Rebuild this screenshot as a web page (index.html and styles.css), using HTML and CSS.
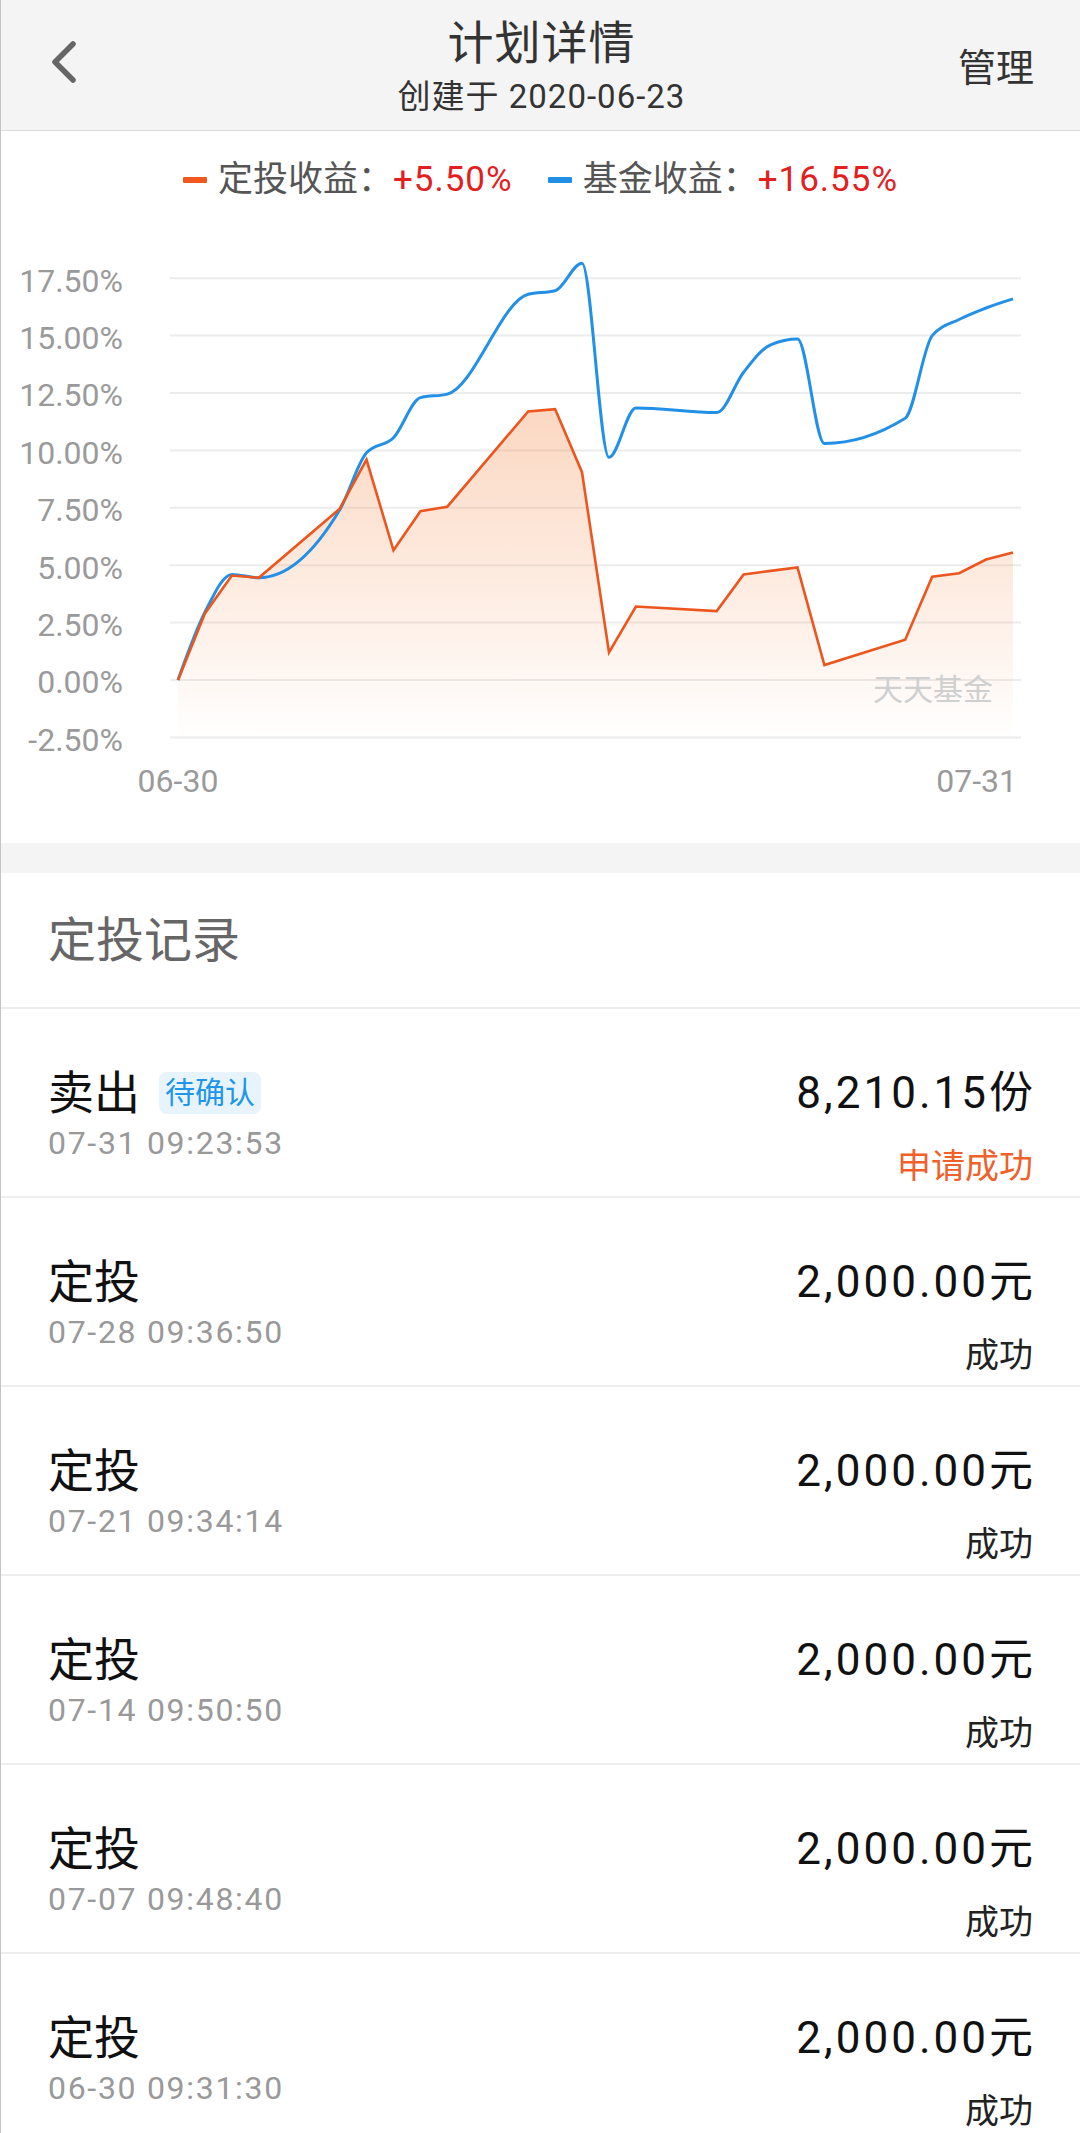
FILE: index.html
```html
<!DOCTYPE html>
<html lang="zh-CN">
<head>
<meta charset="utf-8">
<title>计划详情</title>
<link rel="stylesheet" href="styles.css">
</head>
<body>
<div class="page">
  <header class="topbar">
    <a class="back" aria-label="返回">
      <svg viewBox="0 0 30 50" width="30" height="50"><polyline points="24,4 6,22 24,40" fill="none" stroke="#666" stroke-width="5.5" stroke-linecap="round" stroke-linejoin="round"/></svg>
    </a>
    <div class="title-wrap">
      <div class="title">计划详情</div>
      <div class="subtitle">创建于 2020-06-23</div>
    </div>
    <a class="manage">管理</a>
  </header>

  <section class="chart-card">
    <div class="legend">
      <span class="legend-item"><i class="swatch swatch-plan"></i>定投收益：<em class="num">+5.50%</em></span>
      <span class="legend-item"><i class="swatch swatch-fund"></i>基金收益：<em class="num">+16.55%</em></span>
    </div>
    <svg class="chart" viewBox="0 0 1079 643" width="1079" height="643">
      <defs>
        <linearGradient id="planFill" gradientUnits="userSpaceOnUse" x1="0" y1="205" x2="0" y2="540">
          <stop offset="0" stop-color="#f3792f" stop-opacity="0.30"/>
          <stop offset="0.55" stop-color="#f3792f" stop-opacity="0.14"/>
          <stop offset="1" stop-color="#f3792f" stop-opacity="0"/>
        </linearGradient>
      </defs>
      <g class="grid">
        <line x1="169" x2="1020" y1="78.2" y2="78.2"/>
        <line x1="169" x2="1020" y1="135.6" y2="135.6"/>
        <line x1="169" x2="1020" y1="193" y2="193"/>
        <line x1="169" x2="1020" y1="250.4" y2="250.4"/>
        <line x1="169" x2="1020" y1="307.8" y2="307.8"/>
        <line x1="169" x2="1020" y1="365.2" y2="365.2"/>
        <line x1="169" x2="1020" y1="422.6" y2="422.6"/>
        <line x1="169" x2="1020" y1="480" y2="480"/>
        <line x1="169" x2="1020" y1="537.4" y2="537.4"/>
      </g>
      <g class="ylabels">
        <text x="122" y="91.6">17.50%</text>
        <text x="122" y="149">15.00%</text>
        <text x="122" y="206.4">12.50%</text>
        <text x="122" y="263.8">10.00%</text>
        <text x="122" y="321.2">7.50%</text>
        <text x="122" y="378.6">5.00%</text>
        <text x="122" y="436">2.50%</text>
        <text x="122" y="493.4">0.00%</text>
        <text x="122" y="550.8">-2.50%</text>
      </g>
      <path id="planArea" fill="url(#planFill)" d=""/>
      <text class="watermark" x="872" y="500">天天基金</text>
      <path id="fundLine" class="line-fund" d=""/>
      <path id="planLine" class="line-plan" d=""/>
      <g class="xlabels">
        <text x="177" y="592" text-anchor="middle">06-30</text>
        <text x="1016" y="592" text-anchor="end">07-31</text>
      </g>
    </svg>
  </section>

  <div class="band"></div>

  <section class="records">
    <h2 class="records-title">定投记录</h2>
    <ul class="record-list">
      <li class="record">
        <div class="rec-left">
          <div class="rec-type">卖出<span class="badge">待确认</span></div>
          <div class="rec-time">07-31 09:23:53</div>
        </div>
        <div class="rec-right">
          <div class="rec-amount">8,210.15份</div>
          <div class="rec-status rec-status-pending">申请成功</div>
        </div>
      </li>
      <li class="record">
        <div class="rec-left">
          <div class="rec-type">定投</div>
          <div class="rec-time">07-28 09:36:50</div>
        </div>
        <div class="rec-right">
          <div class="rec-amount">2,000.00元</div>
          <div class="rec-status">成功</div>
        </div>
      </li>
      <li class="record">
        <div class="rec-left">
          <div class="rec-type">定投</div>
          <div class="rec-time">07-21 09:34:14</div>
        </div>
        <div class="rec-right">
          <div class="rec-amount">2,000.00元</div>
          <div class="rec-status">成功</div>
        </div>
      </li>
      <li class="record">
        <div class="rec-left">
          <div class="rec-type">定投</div>
          <div class="rec-time">07-14 09:50:50</div>
        </div>
        <div class="rec-right">
          <div class="rec-amount">2,000.00元</div>
          <div class="rec-status">成功</div>
        </div>
      </li>
      <li class="record">
        <div class="rec-left">
          <div class="rec-type">定投</div>
          <div class="rec-time">07-07 09:48:40</div>
        </div>
        <div class="rec-right">
          <div class="rec-amount">2,000.00元</div>
          <div class="rec-status">成功</div>
        </div>
      </li>
      <li class="record">
        <div class="rec-left">
          <div class="rec-type">定投</div>
          <div class="rec-time">06-30 09:31:30</div>
        </div>
        <div class="rec-right">
          <div class="rec-amount">2,000.00元</div>
          <div class="rec-status">成功</div>
        </div>
      </li>
    </ul>
  </section>
</div>
<script src="script.js"></script>
</body>
</html>
```

FILE: styles.css
```css
* { box-sizing: border-box; }
html, body { margin: 0; padding: 0; background: #fff; }
body {
  font-family: Roboto, "Noto Sans CJK SC", sans-serif;
  color: #111;
}
.page {
  width: 1080px;
  border-left: 1px solid #c4c4c4;
  min-height: 2133px;
}
a { color: inherit; text-decoration: none; }

/* header */
.topbar {
  height: 131px;
  background: #f4f4f4;
  border-bottom: 1px solid #dcdcdc;
  display: grid;
  grid-template-columns: 1fr auto 1fr;
  align-items: start;
  padding: 0 46px 0 48px;
}
.back {
  justify-self: start;
  margin-top: 40px;
  display: block;
  width: 30px;
  height: 50px;
}
.back svg { display: block; }
.title-wrap {
  text-align: center;
  padding-top: 15px;
}
.title {
  font-size: 46px;
  line-height: 56px;
  color: #333;
  letter-spacing: 1px;
}
.subtitle {
  margin-top: 6px;
  font-size: 33px;
  line-height: 40px;
  color: #333;
  letter-spacing: 1px;
}
.manage {
  justify-self: end;
  margin-top: 46px;
  font-size: 38px;
  line-height: 44px;
  color: #333;
}

/* chart */
.chart-card {
  height: 712px;
  padding-top: 29px;
}
.legend {
  display: flex;
  justify-content: center;
  gap: 35px;
  height: 40px;
  line-height: 40px;
  font-size: 35px;
  color: #555;
}
.legend-item {
  display: flex;
  align-items: center;
}
.swatch {
  display: inline-block;
  width: 24px;
  height: 6px;
  border-radius: 1px;
  margin-right: 11px;
}
.swatch-plan { background: #f0581e; }
.swatch-fund { background: #1f8fe6; }
.legend .num {
  font-style: normal;
  color: #e3201f;
  letter-spacing: 1px;
}
.chart { display: block; }
.grid line { stroke: #ececec; stroke-width: 2; }
.ylabels text {
  font-size: 32px;
  fill: #9a9a9a;
  text-anchor: end;
}
.xlabels text {
  font-size: 32px;
  fill: #9a9a9a;
}
.watermark {
  font-size: 30px;
  fill: #cfcfcf;
}
.line-plan {
  fill: none;
  stroke: #ec551d;
  stroke-width: 2.6;
  stroke-linejoin: miter;
}
.line-fund {
  fill: none;
  stroke: #2290e6;
  stroke-width: 3;
  stroke-linejoin: round;
}

.band {
  height: 30px;
  background: #f4f4f4;
}

/* records */
.records-title {
  margin: 0;
  height: 136px;
  padding: 0 0 8px 47px;
  display: flex;
  align-items: center;
  font-size: 48px;
  font-weight: normal;
  color: #666;
  border-bottom: 2px solid #eeeeee;
}
.record-list {
  list-style: none;
  margin: 0;
  padding: 0;
}
.record {
  height: 189px;
  padding: 61px 47px 0 47px;
  display: flex;
  justify-content: space-between;
  align-items: flex-start;
  border-bottom: 2px solid #eeeeee;
}
.rec-type {
  display: flex;
  align-items: center;
  font-size: 46px;
  line-height: 46px;
  height: 46px;
  color: #111;
}
.badge {
  margin-left: 19px;
  height: 42px;
  line-height: 42px;
  padding: 0 6px;
  border-radius: 8px;
  background: #e8f4fd;
  color: #2196e8;
  font-size: 30px;
}
.rec-time {
  margin-top: 9px;
  font-size: 32px;
  line-height: 36px;
  color: #999;
  letter-spacing: 1.7px;
}
.rec-right {
  display: flex;
  flex-direction: column;
  align-items: flex-end;
}
.rec-amount {
  font-size: 44px;
  line-height: 46px;
  height: 46px;
  color: #111;
  letter-spacing: 3px;
  margin-right: -3px;
}
.rec-status {
  margin-top: 30px;
  font-size: 34px;
  line-height: 40px;
  color: #222;
}
.rec-status-pending { color: #f0602a; }
```

FILE: script.js
```js
(function () {
  var days = [0, 1, 2, 3, 6, 7, 8, 9, 10, 13, 14, 15, 16, 17, 20, 21, 22, 23, 24, 27, 28, 29, 30, 31];
  var plan = [0, 2.9, 4.55, 4.45, 7.45, 9.6, 5.65, 7.35, 7.55, 11.7, 11.8, 9.05, 1.2, 3.2, 3.0, 4.6, 4.75, 4.9, 0.65, 1.75, 4.5, 4.65, 5.25, 5.55];
  var fund = [0, 2.95, 4.6, 4.45, 7.4, 9.9, 10.55, 12.3, 12.45, 16.8, 16.95, 18.15, 9.7, 11.85, 11.65, 13.4, 14.6, 14.85, 10.3, 11.4, 15.0, 15.7, 16.2, 16.6];

  function X(d) { return 177 + d * 26.935; }
  function Y(v) { return 480 - v * 22.96; }
  function f(n) { return n.toFixed(1); }

  var pp = days.map(function (d, i) { return [X(d), Y(plan[i])]; });
  var fp = days.map(function (d, i) { return [X(d), Y(fund[i])]; });

  var line = 'M' + pp.map(function (p) { return f(p[0]) + ',' + f(p[1]); }).join(' L');
  document.getElementById('planLine').setAttribute('d', line);
  var last = pp[pp.length - 1];
  var area = line + ' L' + f(last[0]) + ',537.4 L' + f(pp[0][0]) + ',537.4 Z';
  document.getElementById('planArea').setAttribute('d', area);

  /* monotone cubic interpolation */
  function sign(x) { return x < 0 ? -1 : 1; }
  var n = fp.length, t = [];
  for (var i = 0; i < n; i++) {
    if (i === 0 || i === n - 1) { t.push(null); continue; }
    var h0 = fp[i][0] - fp[i - 1][0], h1 = fp[i + 1][0] - fp[i][0];
    var s0 = (fp[i][1] - fp[i - 1][1]) / h0, s1 = (fp[i + 1][1] - fp[i][1]) / h1;
    var p = (s0 * h1 + s1 * h0) / (h0 + h1);
    t.push((sign(s0) + sign(s1)) * Math.min(Math.abs(s0), Math.abs(s1), 0.5 * Math.abs(p)) || 0);
  }
  function slope2(a, b, tt) {
    var h = b[0] - a[0];
    return h ? (3 * (b[1] - a[1]) / h - tt) / 2 : tt;
  }
  t[0] = slope2(fp[0], fp[1], t[1]);
  t[n - 1] = slope2(fp[n - 2], fp[n - 1], t[n - 2]);

  var d = 'M' + f(fp[0][0]) + ',' + f(fp[0][1]);
  for (var j = 1; j < n; j++) {
    var a = fp[j - 1], b = fp[j], dx = (b[0] - a[0]) / 3;
    d += ' C' + f(a[0] + dx) + ',' + f(a[1] + dx * t[j - 1]) + ' ' +
         f(b[0] - dx) + ',' + f(b[1] - dx * t[j]) + ' ' + f(b[0]) + ',' + f(b[1]);
  }
  document.getElementById('fundLine').setAttribute('d', d);
})();
```
